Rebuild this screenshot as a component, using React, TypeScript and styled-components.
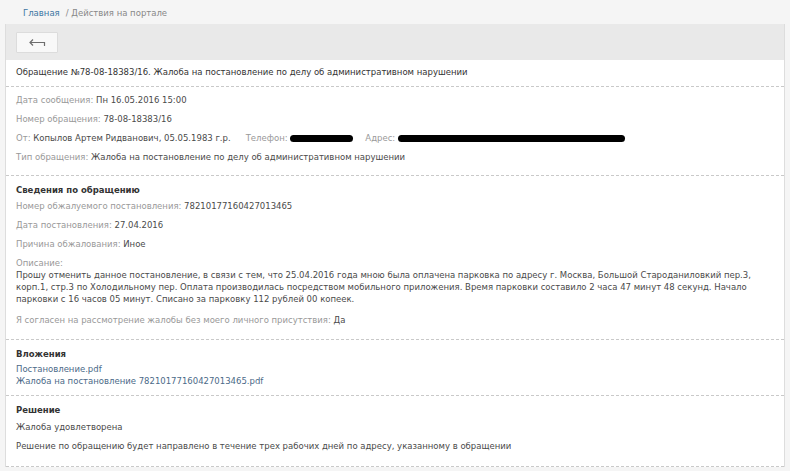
import styled, { createGlobalStyle } from "styled-components";

const GlobalStyle = createGlobalStyle`
  body {
    margin: 0;
    background: #f5f5f5;
    font-family: "DejaVu Sans", Verdana, sans-serif;
    font-size: 8.5px;
    color: #4a4a4a;
  }
`;

const Breadcrumbs = styled.div`
  height: 24px;
  line-height: 27px;
  padding-left: 23px;
  color: #888;
`;

const CrumbLink = styled.a`
  color: #3d77a3;
  text-decoration: none;
  margin-right: 6px;
`;

const Panel = styled.div`
  margin: 0 5px;
  background: #fff;
  border-left: 1px solid #ddd;
  border-right: 1px solid #ddd;
`;

const Toolbar = styled.div`
  height: 36px;
  background: #e9e9e9;
  padding: 8px 0 0 10px;
  box-sizing: border-box;
`;

const BackButton = styled.button`
  width: 42px;
  height: 21px;
  padding: 0;
  display: flex;
  align-items: center;
  justify-content: center;
  background: #f8f8f8;
  border: 1px solid #dcdcdc;
  border-radius: 1px;
  cursor: pointer;
`;

const Section = styled.div<{ $bottom?: number }>`
  padding: 4px 16px ${(p) => p.$bottom ?? 8}px 10px;
  border-bottom: 1px dashed #c9c9c9;
`;

const TitleRow = styled.div`
  padding: 5px 10px 7px;
  line-height: 14px;
  color: #333;
  border-bottom: 1px dashed #c9c9c9;
`;

const Heading = styled.div`
  font-weight: bold;
  line-height: 17px;
  color: #333;
  padding-top: 2px;
  margin-bottom: -2px;
`;

const Row = styled.div<{ $top?: number }>`
  line-height: 19px;
  margin-top: ${(p) => p.$top ?? 0}px;
  display: flex;
  align-items: center;
  white-space: nowrap;
`;

const Label = styled.span`
  color: #999;
`;

const Field = styled.span<{ $gap?: number }>`
  display: inline-flex;
  align-items: center;
  margin-left: ${(p) => p.$gap ?? 0}px;
`;

const Redacted = styled.span<{ $w: number }>`
  display: inline-block;
  width: ${(p) => p.$w}px;
  height: 7px;
  border-radius: 4px;
  background: #000;
`;

const SmallLabel = styled.div`
  color: #999;
  line-height: 12px;
  margin-top: 3px;
`;

const Paragraph = styled.div`
  line-height: 12px;
  max-width: 745px;
`;

const FileLink = styled.a<{ $top?: number }>`
  display: block;
  line-height: 12px;
  color: #4b6a88;
  text-decoration: none;
  margin-top: ${(p) => p.$top ?? 0}px;
`;

function BackIcon() {
  return (
    <svg width="17" height="9" viewBox="0 0 17 9" fill="none">
      <path
        d="M4 1.5 L1 4.5 L4 7.5 M1 4.5 H15.5 V8"
        stroke="#6d6d6d"
        strokeWidth="1.2"
      />
    </svg>
  );
}

export default function App() {
  return (
    <>
      <GlobalStyle />
      <Breadcrumbs>
        <CrumbLink href="#">Главная</CrumbLink>/ Действия на портале
      </Breadcrumbs>
      <Panel>
        <Toolbar>
          <BackButton>
            <BackIcon />
          </BackButton>
        </Toolbar>
        <TitleRow>
          Обращение №78-08-18383/16. Жалоба на постановление по делу об
          административном нарушении
        </TitleRow>

        <Section>
          <Row>
            <Label>Дата сообщения:&nbsp;</Label>Пн 16.05.2016 15:00
          </Row>
          <Row>
            <Label>Номер обращения:&nbsp;</Label>78-08-18383/16
          </Row>
          <Row>
            <Field>
              <Label>От:&nbsp;</Label>Копылов Артем Ридванович, 05.05.1983 г.р.
            </Field>
            <Field $gap={15}>
              <Label>Телефон:&nbsp;</Label>
              <Redacted $w={63} />
            </Field>
            <Field $gap={12}>
              <Label>Адрес:&nbsp;</Label>
              <Redacted $w={227} />
            </Field>
          </Row>
          <Row>
            <Label>Тип обращения:&nbsp;</Label>Жалоба на постановление по делу
            об административном нарушении
          </Row>
        </Section>

        <Section $bottom={9}>
          <Heading>Сведения по обращению</Heading>
          <Row>
            <Label>Номер обжалуемого постановления:&nbsp;</Label>
            78210177160427013465
          </Row>
          <Row>
            <Label>Дата постановления:&nbsp;</Label>27.04.2016
          </Row>
          <Row>
            <Label>Причина обжалования:&nbsp;</Label>Иное
          </Row>
          <SmallLabel>Описание:</SmallLabel>
          <Paragraph>
            Прошу отменить данное постановление, в связи с тем, что 25.04.2016
            года мною была оплачена парковка по адресу г. Москва, Большой
            Староданиловкий пер.3, корп.1, стр.3 по Холодильному пер. Оплата
            производилась посредством мобильного приложения. Время парковки
            составило 2 часа 47 минут 48 секунд. Начало парковки с 16 часов 05
            минут. Списано за парковку 112 рублей 00 копеек.
          </Paragraph>
          <Row $top={6}>
            <Label>
              Я согласен на рассмотрение жалобы без моего личного
              присутствия:&nbsp;
            </Label>
            Да
          </Row>
        </Section>

        <Section>
          <Heading>Вложения</Heading>
          <FileLink href="#" $top={2}>
            Постановление.pdf
          </FileLink>
          <FileLink href="#">
            Жалоба на постановление 78210177160427013465.pdf
          </FileLink>
        </Section>

        <Section $bottom={10}>
          <Heading>Решение</Heading>
          <Row $top={1}>Жалоба удовлетворена</Row>
          <Row>
            Решение по обращению будет направлено в течение трех рабочих дней
            по адресу, указанному в обращении
          </Row>
        </Section>
      </Panel>
    </>
  );
}
